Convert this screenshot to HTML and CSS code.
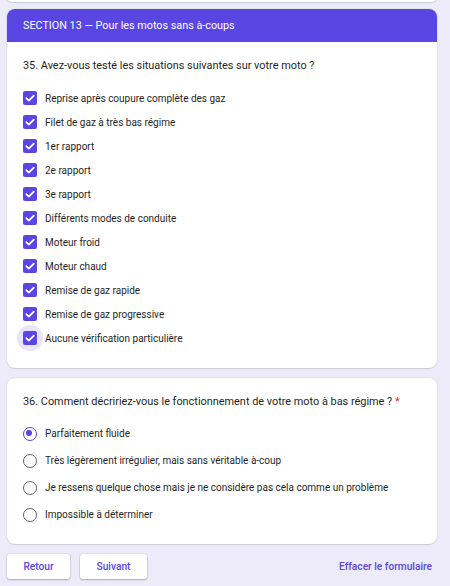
FILE: index.html
```html
<!DOCTYPE html>
<html lang="fr">
<head>
<meta charset="utf-8">
<link rel="stylesheet" href="styles.css">
</head>
<body>
<div class="page">
  <div class="card stub"></div>

  <div class="card">
    <div class="section-head">SECTION 13 — Pour les motos sans à-coups</div>
    <div class="body body-1">
      <div class="question">35. Avez-vous testé les situations suivantes sur votre moto ?</div>
      <ul class="options checks">
        <li><span class="cb"><svg viewBox="0 0 14 14"><path d="M3.3 7.2 L5.9 9.7 L10.8 4.6" /></svg></span>Reprise après coupure complète des gaz</li>
        <li><span class="cb"><svg viewBox="0 0 14 14"><path d="M3.3 7.2 L5.9 9.7 L10.8 4.6" /></svg></span>Filet de gaz à très bas régime</li>
        <li><span class="cb"><svg viewBox="0 0 14 14"><path d="M3.3 7.2 L5.9 9.7 L10.8 4.6" /></svg></span>1er rapport</li>
        <li><span class="cb"><svg viewBox="0 0 14 14"><path d="M3.3 7.2 L5.9 9.7 L10.8 4.6" /></svg></span>2e rapport</li>
        <li><span class="cb"><svg viewBox="0 0 14 14"><path d="M3.3 7.2 L5.9 9.7 L10.8 4.6" /></svg></span>3e rapport</li>
        <li><span class="cb"><svg viewBox="0 0 14 14"><path d="M3.3 7.2 L5.9 9.7 L10.8 4.6" /></svg></span>Différents modes de conduite</li>
        <li><span class="cb"><svg viewBox="0 0 14 14"><path d="M3.3 7.2 L5.9 9.7 L10.8 4.6" /></svg></span>Moteur froid</li>
        <li><span class="cb"><svg viewBox="0 0 14 14"><path d="M3.3 7.2 L5.9 9.7 L10.8 4.6" /></svg></span>Moteur chaud</li>
        <li><span class="cb"><svg viewBox="0 0 14 14"><path d="M3.3 7.2 L5.9 9.7 L10.8 4.6" /></svg></span>Remise de gaz rapide</li>
        <li><span class="cb"><svg viewBox="0 0 14 14"><path d="M3.3 7.2 L5.9 9.7 L10.8 4.6" /></svg></span>Remise de gaz progressive</li>
        <li><span class="cb focus"><svg viewBox="0 0 14 14"><path d="M3.3 7.2 L5.9 9.7 L10.8 4.6" /></svg></span>Aucune vérification particulière</li>
      </ul>
    </div>
  </div>

  <div class="card card-2">
    <div class="body body-2">
      <div class="question">36. Comment décririez-vous le fonctionnement de votre moto à bas régime ? <span class="req">*</span></div>
      <ul class="options radios">
        <li><span class="rb on"></span>Parfaitement fluide</li>
        <li><span class="rb"></span>Très légèrement irrégulier, mais sans véritable à-coup</li>
        <li><span class="rb"></span>Je ressens quelque chose mais je ne considère pas cela comme un problème</li>
        <li><span class="rb"></span>Impossible à déterminer</li>
      </ul>
    </div>
  </div>

  <div class="actions">
    <button class="btn btn-back">Retour</button>
    <button class="btn btn-next">Suivant</button>
    <span class="clear">Effacer le formulaire</span>
  </div>
</div>
</body>
</html>
```

FILE: styles.css
```css
html, body {
  margin: 0;
  padding: 0;
  background: #edebf9;
}
body {
  font-family: Roboto, "Noto Sans", Arial, sans-serif;
  color: #202124;
  width: 450px;
  height: 586px;
  overflow: hidden;
}
.page {
  padding: 0 13px 0 7px;
  display: flex;
  flex-direction: column;
}
.card {
  background: #ffffff;
  border-radius: 8px;
  box-shadow: 0 1px 1px rgba(0,0,0,0.10), 0 0 0 1px rgba(218,220,224,0.6);
  overflow: hidden;
}
.card-2 {
  margin-top: 10px;
}
.stub {
  height: 10px;
  margin-top: -8px;
  margin-bottom: 7px;
}
.section-head {
  background: #5845e2;
  color: #ffffff;
  height: 33px;
  line-height: 33px;
  font-size: 10.8px;
  padding-left: 16px;
}
.body {
  padding: 14px 16px 18px 16px;
}
.body-2 {
  padding: 14px 16px 16px 16px;
}
.question {
  font-size: 10.9px;
  line-height: 20px;
  height: 20px;
  color: #1f1f1f;
  white-space: nowrap;
}
.req {
  color: #d93025;
}
.options {
  list-style: none;
  margin: 0;
  padding: 0;
}
.checks {
  margin-top: 10px;
}
.radios {
  margin-top: 8px;
}
.options li {
  display: flex;
  align-items: center;
  font-size: 10px;
  color: #1f1f1f;
  white-space: nowrap;
}
.checks li {
  height: 24px;
}
.radios li {
  height: 27px;
}
.cb {
  position: relative;
  width: 14px;
  height: 14px;
  border-radius: 2px;
  background: #5a46e1;
  margin-right: 8px;
  flex: none;
  display: flex;
}
.cb svg {
  width: 14px;
  height: 14px;
  position: relative;
  z-index: 1;
}
.cb path {
  fill: none;
  stroke: #ffffff;
  stroke-width: 1.7;
  stroke-linecap: round;
  stroke-linejoin: round;
}
.cb.focus::before {
  content: "";
  position: absolute;
  left: -6px;
  top: -6px;
  width: 26px;
  height: 26px;
  border-radius: 50%;
  background: #e8e5fa;
  z-index: 0;
}
.cb.focus::after {
  content: "";
  position: absolute;
  inset: 0;
  border-radius: 2px;
  background: #5a46e1;
  z-index: 0;
}
.rb {
  width: 14px;
  height: 14px;
  border: 1.6px solid #5f6368;
  border-radius: 50%;
  box-sizing: border-box;
  margin-right: 8px;
  flex: none;
  position: relative;
}
.rb.on {
  border-color: #5a46e1;
}
.rb.on::after {
  content: "";
  position: absolute;
  left: 2.4px;
  top: 2.4px;
  width: 6px;
  height: 6px;
  border-radius: 50%;
  background: #5a46e1;
}
.actions {
  margin-top: 10px;
  display: flex;
  align-items: center;
  gap: 10px;
}
.btn {
  height: 25px;
  border: none;
  border-radius: 3px;
  background: #ffffff;
  box-shadow: 0 1px 2px rgba(0,0,0,0.25), 0 0 0 1px rgba(218,220,224,0.5);
  color: #5a46e1;
  font-family: Roboto, "Noto Sans", Arial, sans-serif;
  font-size: 10.2px;
  font-weight: 500;
  padding: 0;
}
.btn-back { width: 63px; }
.btn-next { width: 67px; }
.clear {
  margin-left: auto;
  margin-right: 5px;
  color: #5a46e1;
  font-size: 10.2px;
  font-weight: 500;
}
```
